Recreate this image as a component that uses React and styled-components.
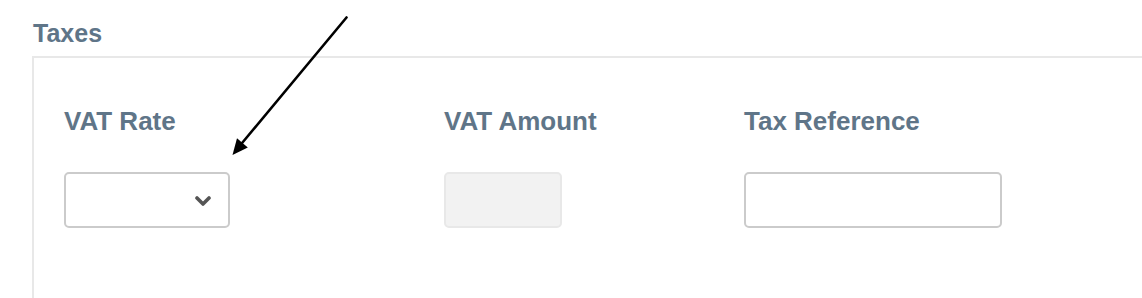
import React from 'react'
import styled, { createGlobalStyle } from 'styled-components'

const GlobalStyle = createGlobalStyle`
    html, body {
        margin: 0;
        padding: 0;
        background: #ffffff;
        overflow: hidden;
    }
    body {
        font-family: "Liberation Sans", Arial, sans-serif;
    }
`

const Page = styled.div`
    position: relative;
    height: 298px;
    padding: 21px 0 0 32px;
    box-sizing: border-box;
    display: flex;
    flex-direction: column;
`
const Heading = styled.h2`
    margin: 0 0 11px 1px;
    font-size: 25px;
    line-height: 24px;
    font-weight: 700;
    color: #5f7588;
`
const Panel = styled.section`
    flex: 1;
    border-top: 2px solid #e8e8e8;
    border-left: 2px solid #e8e8e8;
    padding: 51px 0 0 30px;
    box-sizing: border-box;
    display: flex;
`
const Field = styled.div`
    width: ${({ $width }) => $width}px;
    display: flex;
    flex-direction: column;
    gap: 38px;
`
const Label = styled.label`
    font-size: 26px;
    line-height: 25px;
    font-weight: 700;
    color: #5f7588;
`
const Box = styled.div`
    width: ${({ $width }) => $width}px;
    height: 56px;
    box-sizing: border-box;
    border: 2px solid ${({ $disabled }) => ($disabled ? '#e8e8e8' : '#cbcbcb')};
    background: ${({ $disabled }) => ($disabled ? '#f2f2f2' : '#ffffff')};
    border-radius: 5px;
    display: flex;
    align-items: center;
    justify-content: flex-end;
    padding-right: 17px;
`
const Chevron = styled.svg`
    width: 16px;
    height: 10px;
    margin-top: 2px;
    filter: blur(0.5px);
`
const Annotation = styled.svg`
    position: absolute;
    left: 0;
    top: 0;
    pointer-events: none;
`

const Arrow = () => (
    <Annotation width="1142" height="298" viewBox="0 0 1142 298">
        <line x1="346.5" y1="17.5" x2="240" y2="145.5" stroke="#000" strokeWidth="2.6" strokeLinecap="round" />
        <polygon points="232.5,155 247.8,147.4 237,138.3" fill="#000" />
    </Annotation>
)

export default function App() {
    return (
        <>
            <GlobalStyle />
            <Page>
                <Heading>Taxes</Heading>
                <Panel>
                    <Field $width={380}>
                        <Label>VAT Rate</Label>
                        <Box $width={166}>
                            <Chevron viewBox="0 0 16 10">
                                <polyline points="2,2 8,8 14,2" fill="none" stroke="#555" strokeWidth="3.6" strokeLinecap="round" strokeLinejoin="round" />
                            </Chevron>
                        </Box>
                    </Field>
                    <Field $width={300}>
                        <Label>VAT Amount</Label>
                        <Box $width={118} $disabled />
                    </Field>
                    <Field $width={300}>
                        <Label>Tax Reference</Label>
                        <Box $width={258} />
                    </Field>
                </Panel>
                <Arrow />
            </Page>
        </>
    )
}
